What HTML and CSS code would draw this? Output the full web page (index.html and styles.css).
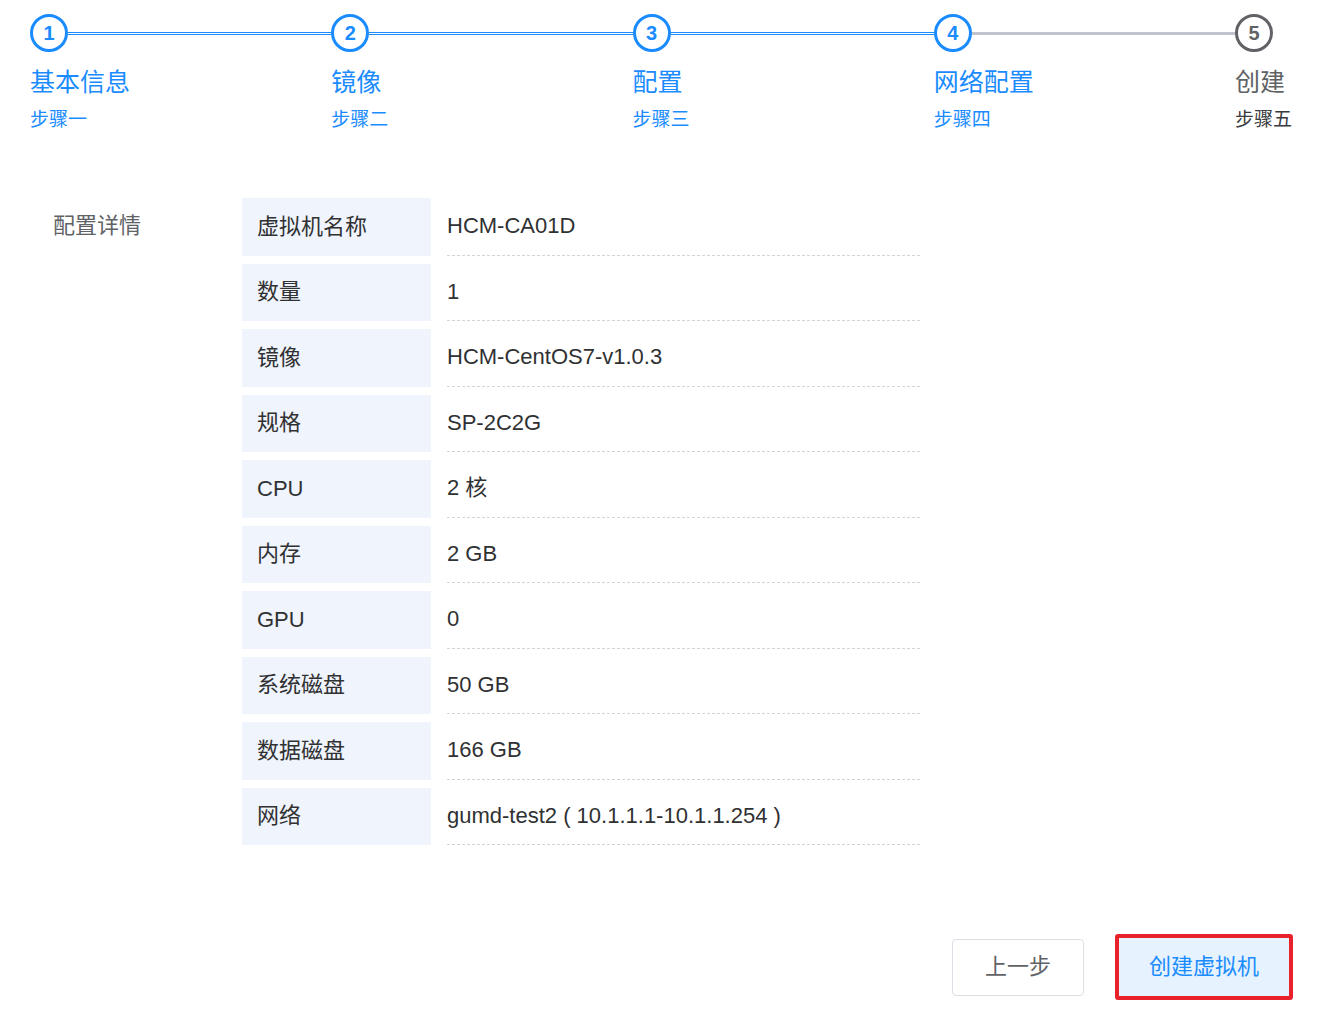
FILE: index.html
```html
<!DOCTYPE html>
<html lang="zh-CN">
<head>
<meta charset="utf-8">
<title>创建虚拟机</title>
<link rel="stylesheet" href="styles.css">
</head>
<body>
<div class="steps">
  <div class="step done">
    <div class="head"><span class="icon">1</span><span class="line"></span></div>
    <div class="title">基本信息</div>
    <div class="desc">步骤一</div>
  </div>
  <div class="step done">
    <div class="head"><span class="icon">2</span><span class="line"></span></div>
    <div class="title">镜像</div>
    <div class="desc">步骤二</div>
  </div>
  <div class="step done">
    <div class="head"><span class="icon">3</span><span class="line"></span></div>
    <div class="title">配置</div>
    <div class="desc">步骤三</div>
  </div>
  <div class="step done next-wait">
    <div class="head"><span class="icon">4</span><span class="line"></span></div>
    <div class="title">网络配置</div>
    <div class="desc">步骤四</div>
  </div>
  <div class="step wait last">
    <div class="head"><span class="icon">5</span></div>
    <div class="title">创建</div>
    <div class="desc">步骤五</div>
  </div>
</div>

<div class="detail">
  <div class="detail-label">配置详情</div>
  <div class="rows">
    <div class="row"><div class="key">虚拟机名称</div><div class="val">HCM-CA01D</div></div>
    <div class="row"><div class="key">数量</div><div class="val">1</div></div>
    <div class="row"><div class="key">镜像</div><div class="val">HCM-CentOS7-v1.0.3</div></div>
    <div class="row"><div class="key">规格</div><div class="val">SP-2C2G</div></div>
    <div class="row"><div class="key">CPU</div><div class="val">2 核</div></div>
    <div class="row"><div class="key">内存</div><div class="val">2 GB</div></div>
    <div class="row"><div class="key">GPU</div><div class="val">0</div></div>
    <div class="row"><div class="key">系统磁盘</div><div class="val">50 GB</div></div>
    <div class="row"><div class="key">数据磁盘</div><div class="val">166 GB</div></div>
    <div class="row"><div class="key">网络</div><div class="val">gumd-test2 ( 10.1.1.1-10.1.1.254 )</div></div>
  </div>
</div>

<div class="actions">
  <button class="btn btn-prev">上一步</button>
  <button class="btn btn-create">创建虚拟机</button>
</div>
</body>
</html>
```

FILE: styles.css
```css
html, body {
  margin: 0;
  padding: 0;
  background: #ffffff;
}
body {
  font-family: "Liberation Sans", "Noto Sans CJK SC", sans-serif;
  color: #303133;
}

/* Steps */
.steps {
  display: flex;
  padding: 14px 0 0 30px;
}
.step {
  flex: 0 0 301.25px;
}
.step.last {
  flex: none;
}
.head {
  display: flex;
  align-items: center;
}
.icon {
  width: 38px;
  height: 38px;
  box-sizing: border-box;
  border: 3px solid #1a8cff;
  border-radius: 50%;
  color: #1a8cff;
  font-weight: bold;
  font-size: 20px;
  line-height: 24px;
  display: flex;
  align-items: center;
  justify-content: center;
  flex: none;
}
.line {
  flex: 1;
  height: 0;
  border-top: 3px double #1a8cff;
}
.next-wait .line {
  border-top: 3px solid #c0c4cc;
}
.title {
  margin-top: 12px;
  font-size: 25px;
  line-height: 36px;
  color: #1a8cff;
  white-space: nowrap;
}
.desc {
  margin-top: 6px;
  font-size: 19px;
  line-height: 27px;
  color: #1a8cff;
  white-space: nowrap;
}
.wait .icon {
  border-color: #606266;
  color: #606266;
}
.wait .title {
  color: #606266;
}
.wait .desc {
  color: #3a3b3f;
}

/* Detail */
.detail {
  display: flex;
  margin-top: 65px;
  font-size: 22px;
}
.detail-label {
  width: 242px;
  box-sizing: border-box;
  padding-left: 53px;
  line-height: 55px;
  color: #606266;
  flex: none;
}
.rows {
  display: flex;
  flex-direction: column;
  gap: 8px;
}
.row {
  display: flex;
  height: 57.5px;
}
.key {
  width: 189px;
  box-sizing: border-box;
  padding-left: 15px;
  background: #f0f4fc;
  display: flex;
  align-items: center;
  line-height: 24px;
  color: #303133;
}
.val {
  margin-left: 16px;
  width: 473px;
  box-sizing: border-box;
  border-bottom: 1px dashed #d4d4d4;
  display: flex;
  align-items: center;
  line-height: 24px;
  color: #303133;
  white-space: pre;
}

/* Actions */
.actions {
  display: flex;
  justify-content: flex-end;
  align-items: center;
  gap: 31px;
  padding-right: 33px;
  margin-top: 89px;
}
.btn {
  font-family: "Liberation Sans", "Noto Sans CJK SC", sans-serif;
  font-size: 22px;
  line-height: 24px;
  cursor: pointer;
  box-sizing: border-box;
}
.btn-prev {
  width: 132px;
  height: 57px;
  background: #ffffff;
  border: 1px solid #dcdfe6;
  border-radius: 4px;
  color: #606266;
}
.btn-create {
  width: 178px;
  height: 66px;
  background: #e6f2fe;
  border: 4px solid #e8212b;
  border-radius: 3px;
  color: #1a8cff;
}
```
